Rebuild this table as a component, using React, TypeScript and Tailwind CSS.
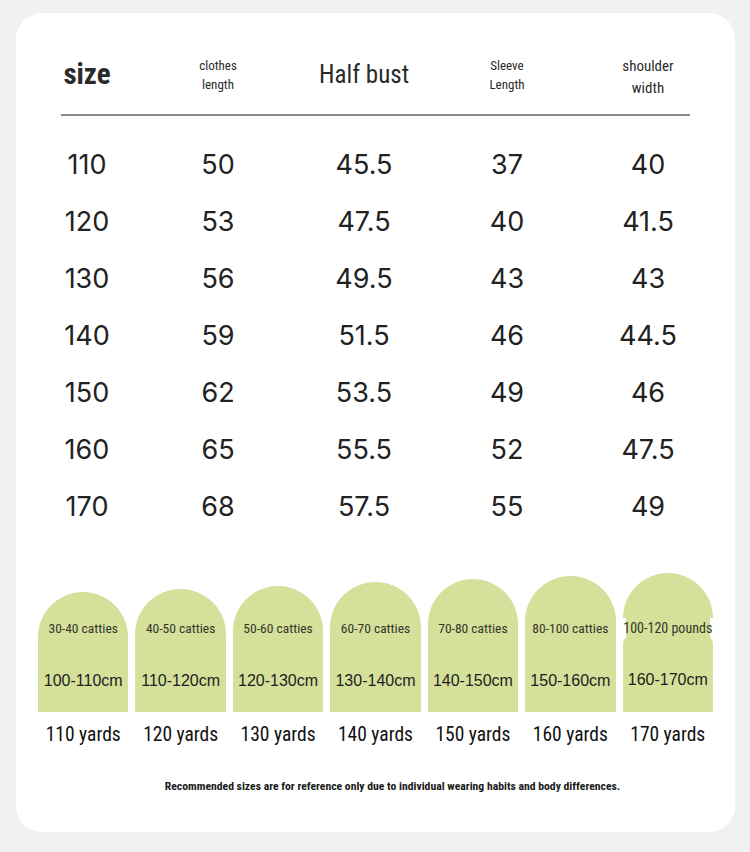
const cond = "font-['Roboto_Condensed','Liberation_Sans_Narrow','DejaVu_Sans_Condensed',Roboto,sans-serif]"

const rows = [
  ["110", "50", "45.5", "37", "40"],
  ["120", "53", "47.5", "40", "41.5"],
  ["130", "56", "49.5", "43", "43"],
  ["140", "59", "51.5", "46", "44.5"],
  ["150", "62", "53.5", "49", "46"],
  ["160", "65", "55.5", "52", "47.5"],
  ["170", "68", "57.5", "55", "49"],
]

const fits = [
  { w: "30-40 catties", cm: "100-110cm", y: "110 yards", h: "h-[120px]" },
  { w: "40-50 catties", cm: "110-120cm", y: "120 yards", h: "h-[123px]" },
  { w: "50-60 catties", cm: "120-130cm", y: "130 yards", h: "h-[126px]" },
  { w: "60-70 catties", cm: "130-140cm", y: "140 yards", h: "h-[130px]" },
  { w: "70-80 catties", cm: "140-150cm", y: "150 yards", h: "h-[133px]" },
  { w: "80-100 catties", cm: "150-160cm", y: "160 yards", h: "h-[136px]" },
]

const cols = "grid grid-cols-[52px_210px_82px_204px_78px]"

function Cell({ children, className = "" }: { children: React.ReactNode; className?: string }) {
  return <div className={`flex justify-center whitespace-nowrap ${className}`}>{children}</div>
}

export default function App() {
  return (
    <div className="min-h-[852px] w-[750px] bg-[#f2f1f1] pt-[13px] pl-[16px]">
      <div className="h-[819px] w-[719px] rounded-[26px] bg-white">
        <div className="px-[45px] pt-[32px]">
          <div className={`${cols} h-[60px] items-center text-[#2a2a2a]`}>
            <Cell className={`${cond} text-[29px] font-bold`}>size</Cell>
            <Cell className={`${cond} text-center text-[13px] leading-[19px]`}>
              <div>clothes<br />length</div>
            </Cell>
            <Cell className={`${cond} text-[25px]`}>Half bust</Cell>
            <Cell className={`${cond} text-center text-[13px] leading-[19px]`}>
              <div>Sleeve<br />Length</div>
            </Cell>
            <Cell className={`${cond} text-center text-[15px] leading-[22px]`}>
              <div className="pt-[4px]">shoulder<br />width</div>
            </Cell>
          </div>
          <div className="mt-[9px] h-[2px] w-[629px] bg-[#8a8a8a]" />
          <div className="mt-[21px]">
            {rows.map((r) => (
              <div key={r[0]} className={`${cols} h-[57px] items-center font-['Inter',sans-serif] text-[27px] text-[#222]`}>
                {r.map((v, i) => (
                  <Cell key={i}>{v}</Cell>
                ))}
              </div>
            ))}
          </div>
        </div>

        <div className="mt-[37px] grid grid-cols-7 gap-x-[7px] px-[22px] items-end">
          {fits.map((f) => (
            <div key={f.y} className="flex flex-col items-center">
              <div className={`flex w-full flex-col items-center justify-end rounded-t-full bg-[#d5e09b] pb-[19px] ${f.h}`}>
                <span className={`${cond} text-[13.5px] text-[#34362a]`}>{f.w}</span>
                <span className="mt-[31px] font-['Liberation_Sans',sans-serif] text-[16px] text-[#1e1e1e]">{f.cm}</span>
              </div>
              <div className={`${cond} mt-[8px] text-[19.5px] text-[#111] whitespace-nowrap`}>{f.y}</div>
            </div>
          ))}
          <div className="flex flex-col items-center">
            <div className="relative flex h-[139px] w-full flex-col">
              <div className="h-[45px] rounded-t-full rounded-b-[8px] bg-[#d5e09b]" />
              <div className="mx-[3px] -my-[2px] h-[22px] bg-[#d5e09b]" />
              <div className="flex-1 rounded-t-[8px] bg-[#d5e09b]" />
              <span className={`${cond} absolute inset-x-0 top-[46px] text-center text-[14px] leading-[18px] whitespace-nowrap text-[#34362a]`}>
                100-120 pounds
              </span>
              <span className="absolute inset-x-0 top-[97px] text-center font-['Liberation_Sans',sans-serif] text-[16px] leading-[20px] text-[#1e1e1e]">
                160-170cm
              </span>
            </div>
            <div className={`${cond} mt-[8px] text-[19.5px] text-[#111] whitespace-nowrap`}>170 yards</div>
          </div>
        </div>

        <p className={`${cond} mt-[29px] pl-[34px] text-center text-[11.7px] font-bold text-[#1a1a1a]`}>
          Recommended sizes are for reference only due to individual wearing habits and body differences.
        </p>
      </div>
    </div>
  )
}
